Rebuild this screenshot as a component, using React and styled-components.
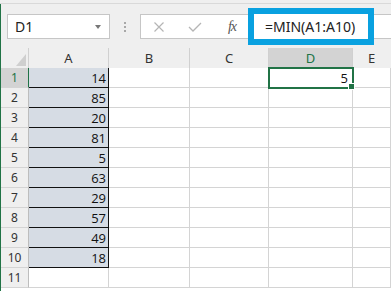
import styled, { createGlobalStyle } from "styled-components";

const GlobalStyle = createGlobalStyle`
  html, body {
    margin: 0;
    padding: 0;
    background: #ffffff;
  }
`;

const colors = {
  toolbar: "#efefef",
  border: "#c6c6c6",
  grid: "#d4d4d4",
  header: "#efefef",
  headerActive: "#d3d3d3",
  green: "#217346",
  blue: "#09a1e0",
  fill: "#d6dce4",
};

const Window = styled.div`
  width: 391px;
  height: 291px;
  overflow: hidden;
  display: flex;
  flex-direction: column;
  background: ${colors.toolbar};
  font-family: "Noto Sans", "Open Sans", sans-serif;
`;

const TopStrip = styled.div`
  height: 3px;
  border-bottom: 1px solid #d9d9d9;
  flex-shrink: 0;
`;

const Body = styled.div`
  flex: 1;
  display: flex;
  flex-direction: column;
  border-left: 1px solid ${colors.green};
`;

const FormulaRow = styled.div`
  display: flex;
  align-items: flex-start;
  padding: 10px 0 9px 6px;
  height: 25px;
`;

const NameBox = styled.div`
  box-sizing: border-box;
  width: 103px;
  height: 25px;
  background: #fff;
  border: 1px solid ${colors.border};
  display: flex;
  align-items: center;
  justify-content: space-between;
  padding: 0 8px 0 7px;
  font-size: 14px;
  color: #222;
`;

const Caret = styled.span`
  width: 0;
  height: 0;
  border-left: 3px solid transparent;
  border-right: 3px solid transparent;
  border-top: 4px solid #777;
`;

const Dots = styled.div`
  width: 30px;
  height: 25px;
  display: flex;
  flex-direction: column;
  align-items: center;
  justify-content: center;
  gap: 2px;

  span {
    width: 2px;
    height: 2px;
    background: #a8a8a8;
  }
`;

const ButtonBox = styled.div`
  box-sizing: border-box;
  width: 108px;
  height: 25px;
  background: #fff;
  border: 1px solid ${colors.border};
  border-right: none;
  display: flex;
  align-items: center;
  padding-left: 12px;
`;

const IconSlot = styled.span`
  display: flex;
  align-items: center;
  justify-content: center;
  width: ${(p) => p.w}px;
  margin-right: ${(p) => p.gap || 0}px;
  height: 23px;
`;

const Fx = styled.span`
  font-family: "Liberation Serif", serif;
  font-style: italic;
  font-size: 14px;
  color: #555;
  letter-spacing: -1px;
`;

const FormulaInput = styled.div`
  margin-top: -6px;
  box-sizing: border-box;
  width: 126px;
  height: 37px;
  border: 6px solid ${colors.blue};
  background: #fff;
  display: flex;
  align-items: center;
  padding-left: 11px;
  font-size: 14px;
  color: #222;
`;

const FormulaRest = styled.div`
  flex: 1;
  box-sizing: border-box;
  height: 25px;
  background: #fff;
  border-top: 1px solid ${colors.border};
  border-bottom: 1px solid ${colors.border};
`;

const Sheet = styled.div`
  flex: 1;
  display: grid;
  grid-template-columns: 28px 80px 81px 79px 84px 1fr;
  grid-auto-rows: 20px;
  background: #fff;
  align-content: start;
`;

const ColHeader = styled.div`
  height: 21px;
  box-sizing: border-box;
  background: ${(p) => (p.$active ? colors.headerActive : colors.header)};
  border-right: 1px solid ${(p) => (p.$last ? "transparent" : "#d0d0d0")};
  border-bottom: 1px solid ${(p) => (p.$active ? colors.green : "#bdbdbd")};
  display: flex;
  align-items: center;
  justify-content: center;
  font-size: 13px;
  color: ${(p) => (p.$active ? colors.green : "#333")};
`;

const Corner = styled(ColHeader)`
  align-items: flex-end;
  justify-content: flex-end;
  padding: 0 2px 2px 0;
`;

const RowHeader = styled.div`
  box-sizing: border-box;
  background: ${(p) => (p.$active ? colors.headerActive : colors.header)};
  border-right: 1px solid ${(p) => (p.$active ? colors.green : "#bdbdbd")};
  border-bottom: 1px solid ${colors.grid};
  display: flex;
  align-items: center;
  justify-content: center;
  font-size: 12px;
  color: ${(p) => (p.$active ? colors.green : "#333")};
`;

const Cell = styled.div`
  box-sizing: border-box;
  border-right: 1px solid ${(p) => (p.$boxed ? "#111" : colors.grid)};
  border-bottom: 1px solid ${(p) => (p.$boxed ? "#111" : colors.grid)};
  background: ${(p) => (p.$boxed ? colors.fill : "#fff")};
  display: flex;
  align-items: center;
  justify-content: flex-end;
  padding-right: 2px;
  font-family: "Open Sans", "Noto Sans", sans-serif;
  font-size: 13px;
  color: #111;
`;

const ActiveCell = styled(Cell)`
  position: relative;
  outline: 2px solid ${colors.green};
  outline-offset: -1px;
  padding-right: 4px;

  &::after {
    content: "";
    position: absolute;
    right: -3px;
    bottom: -3px;
    width: 5px;
    height: 5px;
    background: ${colors.green};
    border: 1px solid #fff;
  }
`;

const values = [14, 85, 20, 81, 5, 63, 29, 57, 49, 18];
const columns = ["A", "B", "C", "D", "E"];

function CrossIcon() {
  return (
    <svg width="12" height="10" viewBox="0 0 12 10">
      <path d="M1.5 0.5 L10.5 9.5 M10.5 0.5 L1.5 9.5" stroke="#b5b5b5" strokeWidth="1.2" fill="none" />
    </svg>
  );
}

function CheckIcon() {
  return (
    <svg width="14" height="10" viewBox="0 0 14 10">
      <path d="M1 5 L5 9 L13 1" stroke="#b5b5b5" strokeWidth="1.3" fill="none" />
    </svg>
  );
}

function CornerMark() {
  return (
    <svg width="10" height="12" viewBox="0 0 10 12">
      <polygon points="10,0 10,12 0,12" fill="#cfcfcf" />
    </svg>
  );
}

function Row({ index }) {
  const value = values[index];
  const boxed = value !== undefined;
  return (
    <>
      <RowHeader $active={index === 0}>{index + 1}</RowHeader>
      <Cell $boxed={boxed}>{value}</Cell>
      <Cell />
      <Cell />
      {index === 0 ? <ActiveCell>5</ActiveCell> : <Cell />}
      <Cell />
    </>
  );
}

export default function App() {
  return (
    <Window>
      <GlobalStyle />
      <TopStrip />
      <Body>
        <FormulaRow>
          <NameBox>
            D1
            <Caret />
          </NameBox>
          <Dots>
            <span />
            <span />
            <span />
          </Dots>
          <ButtonBox>
            <IconSlot w={12} gap={23}><CrossIcon /></IconSlot>
            <IconSlot w={14} gap={24}><CheckIcon /></IconSlot>
            <IconSlot w={12}><Fx>fx</Fx></IconSlot>
          </ButtonBox>
          <FormulaInput>=MIN(A1:A10)</FormulaInput>
          <FormulaRest />
        </FormulaRow>
        <Sheet>
          <Corner><CornerMark /></Corner>
          {columns.map((c, i) => (
            <ColHeader key={c} $active={c === "D"} $last={i === columns.length - 1}>
              {c}
            </ColHeader>
          ))}
          {Array.from({ length: 11 }, (_, r) => (
            <Row key={r} index={r} />
          ))}
        </Sheet>
      </Body>
    </Window>
  );
}
